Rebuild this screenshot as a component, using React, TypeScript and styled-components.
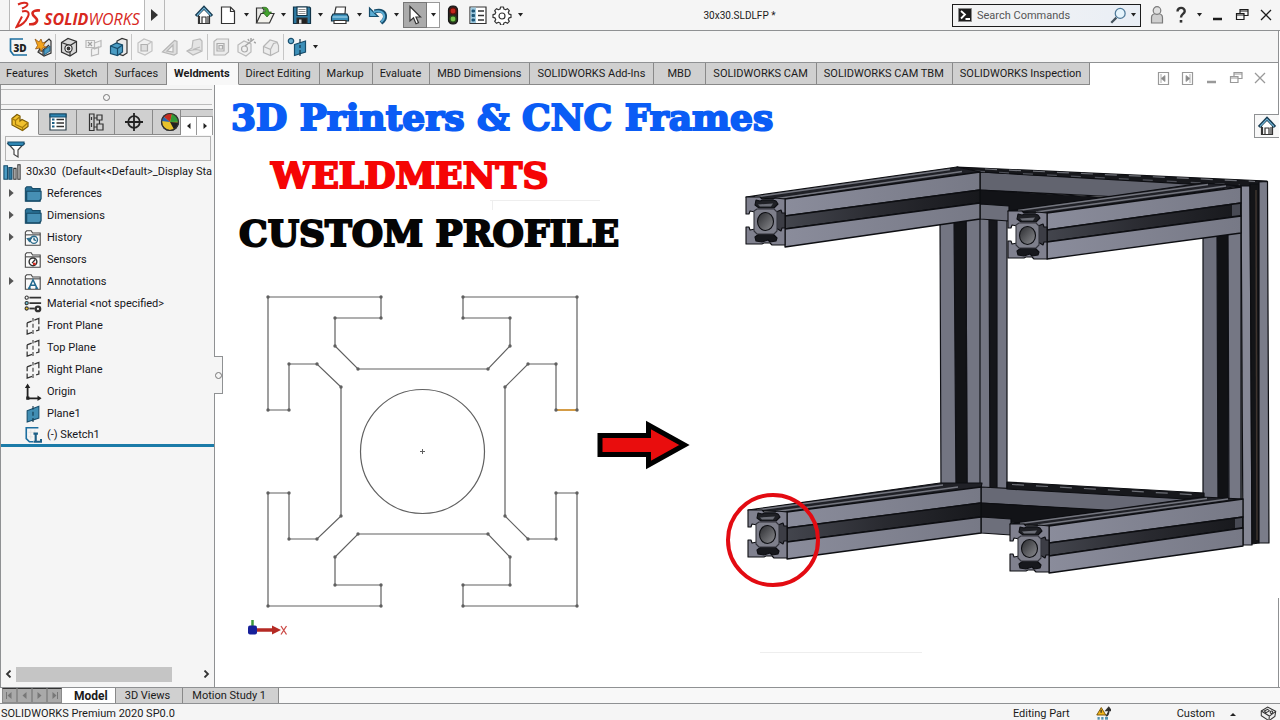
import React from "react";
import styled, { createGlobalStyle, css } from "styled-components";

const line = "#8f9193";
const blue = "#1d7199";

const GlobalStyle = createGlobalStyle`
  * { box-sizing: border-box; }
  body {
    margin: 0;
    background: #fff;
    color: #1b1b1b;
    font-family: Roboto, "Open Sans", sans-serif;
    font-size: 11px;
    line-height: 16px;
  }
  svg { flex: none; }
  button, input {
    font: inherit;
    color: inherit;
    margin: 0;
    padding: 0;
    border: 0;
    background: none;
  }
`;

/* ---------- shell ---------- */

const Shell = styled.div`
  display: flex;
  flex-direction: column;
  min-height: 100vh;
`;

const TitleBar = styled.header`
  display: flex;
  align-items: center;
  height: 31px;
  background: #f5f5f5;
  border-bottom: 1px solid ${line};
`;

const Logo = styled.div`
  display: flex;
  align-items: center;
  gap: 2px;
  width: 136px;
  height: 30px;
  margin-left: 9px;
  padding-left: 5px;
  background: #fff;
  border: solid #b9b9b9;
  border-width: 0 1px;
`;

const LogoText = styled.span`
  padding-top: 8px;
  color: #d8281e;
  font-family: "Open Sans", sans-serif;
  font-size: 16px;
  font-style: italic;
  font-weight: 400;
  line-height: 20px;
  b { font-weight: 700; }
`;

const Flyout = styled.button`
  display: flex;
  align-items: center;
  justify-content: center;
  width: 20px;
  height: 30px;
  border-right: 1px solid #b9b9b9;
`;

const QuickTools = styled.div`
  display: flex;
  align-items: center;
  padding-left: 27px;
`;

const ToolButton = styled.button<{ $w?: number; $pressed?: boolean }>`
  display: flex;
  align-items: center;
  justify-content: center;
  flex: none;
  width: ${(p) => p.$w ?? 24}px;
  height: 26px;
  ${(p) =>
    p.$pressed &&
    css`
      background: #ababab;
      border: 1px solid #777;
    `}
`;

const CaretButton = styled(ToolButton)<{ $boxed?: boolean }>`
  width: 13px;
  ${(p) =>
    p.$boxed &&
    css`
      background: #fff;
      border: 1px solid #999;
      border-left: 0;
      height: 26px;
    `}
`;

const DocTitle = styled.h1`
  flex: 1;
  margin: 0;
  padding-top: 1px;
  font-size: 10px;
  font-weight: 400;
  text-align: center;
  white-space: nowrap;
`;

const Search = styled.div`
  display: flex;
  align-items: center;
  width: 189px;
  height: 23px;
  padding-left: 5px;
  border: 1px solid #1c1c1c;
  background: linear-gradient(90deg, #f4f4f4, #e9eef5);
  input {
    flex: 1;
    min-width: 0;
    padding: 1px 0 0 5px;
    outline: 0;
  }
  input::placeholder { color: #555; opacity: 1; }
`;

const WindowTools = styled.div`
  display: flex;
  align-items: center;
  padding: 0 2px 0 4px;
`;

/* ---------- ribbon ---------- */

const Ribbon = styled.div`
  display: flex;
  align-items: center;
  height: 32px;
  padding-left: 5px;
  margin-right: 1px;
  background: #f5f5f5;
  border: solid ${line};
  border-width: 0 1px 1px 0;
`;

const RibbonGroup = styled.div`
  display: flex;
  align-items: center;
  height: 26px;
  & + & {
    border-left: 1px solid #c6c6c6;
  }
`;

const RibbonButton = styled(ToolButton)<{ $off?: boolean }>`
  width: 25px;
  ${(p) => p.$off && css`opacity: 0.9;`}
`;

const TabRow = styled.div`
  display: flex;
  justify-content: space-between;
  height: 22px;
  margin-right: 1px;
  border-right: 1px solid ${line};
`;

const Tabs = styled.nav`
  display: flex;
`;

const Tab = styled.button<{ $active?: boolean }>`
  min-width: 52px;
  height: 22px;
  padding: 1px 8px 0 7px;
  background: #d0d0d0;
  border: solid #898989;
  border-width: 0 1px 1px 0;
  white-space: nowrap;
  &:first-child { padding: 1px 6px 0; }
  ${(p) =>
    p.$active &&
    css`
      background: #f8f8f8;
      border-bottom-color: #f8f8f8;
      font-weight: 700;
    `}
`;

const DocTools = styled.div`
  display: flex;
  align-items: flex-end;
  padding-right: 6px;
  color: #999;
  button { height: 14px; }
`;

/* ---------- body ---------- */

const Body = styled.main`
  display: flex;
  flex: 1;
`;

const Side = styled.aside`
  display: flex;
  flex-direction: column;
  flex: none;
  width: 215px;
  background: #f5f5f5;
  border: solid ${line};
  border-width: 0 1px;
`;

const Splitter = styled.div`
  display: flex;
  align-items: center;
  justify-content: center;
  height: 16px;
  margin: 4px 2px 0 0;
  border: solid #bcbcbc;
  border-width: 1px 0;
  &::after {
    content: "";
    width: 5px;
    height: 5px;
    border: 1px solid #777;
    border-radius: 50%;
  }
`;

const ManagerTabs = styled.div`
  display: flex;
  align-items: flex-end;
  height: 26px;
  margin: 4px 1px 0 0;
  background: #d0d0d0;
  border-top: 1px solid ${line};
`;

const ManagerTab = styled.button<{ $active?: boolean; $cut?: boolean }>`
  display: flex;
  align-items: center;
  justify-content: center;
  width: 38px;
  height: 25px;
  border: solid #898989;
  border-width: 0 1px 1px 0;
  ${(p) =>
    p.$active &&
    css`
      background: #f8f8f8;
      border-bottom-color: #f8f8f8;
    `}
  ${(p) =>
    p.$cut &&
    css`
      width: 28px;
      justify-content: flex-end;
    `}
`;

const Spin = styled.button`
  display: flex;
  align-items: center;
  justify-content: center;
  flex: 1;
  height: 19px;
  background: #fff;
  border: solid #999;
  border-width: 1px 1px 0 0;
`;

const Filter = styled.label`
  display: flex;
  align-items: center;
  height: 25px;
  margin: 1px 3px 0 4px;
  border: 1px solid #b4b4b4;
  input { flex: 1; min-width: 0; outline: 0; }
`;

const Tree = styled.ul`
  flex: 1;
  margin: 0;
  padding: 0;
  list-style: none;
`;

const TreeRow = styled.li<{ $root?: boolean; $last?: boolean }>`
  display: flex;
  align-items: center;
  gap: 5px;
  height: 22px;
  padding-left: ${(p) => (p.$root ? 2 : 6)}px;
  white-space: nowrap;
  color: #151520;
  > svg { width: 18px; height: 18px; }
  ${(p) =>
    p.$last &&
    css`
      border-bottom: 3px solid #1b7ba8;
    `}
`;

const Twist = styled.span`
  display: flex;
  width: 12px;
  height: 16px;
  padding-top: 3px;
`;

const ScrollRow = styled.div`
  display: flex;
  align-items: center;
  height: 16px;
  margin-bottom: 5px;
  button { display: flex; justify-content: center; width: 15px; }
`;

const Thumb = styled.div`
  width: 156px;
  height: 15px;
  margin-right: auto;
  background: #c5c5c5;
`;

const Canvas = styled.section`
  position: relative;
  flex: 1;
  min-width: 0;
  padding: 3px 16px;
  background: #fff;
`;

const Scene = styled.svg`
  position: absolute;
  inset: 0;
  width: 100%;
  height: 100%;
`;

const Headline = styled.h2<{ $color: string; $indent: number }>`
  position: relative;
  margin: 0 0 0 ${(p) => p.$indent}px;
  color: ${(p) => p.$color};
  -webkit-text-stroke: 2px ${(p) => p.$color};
  stroke-linejoin: round;
  font-family: "DejaVu Serif", serif;
  font-size: 36px;
  font-weight: 700;
  line-height: 58px;
  white-space: nowrap;
`;

const PanelGrip = styled.button`
  position: absolute;
  left: -1px;
  top: 271px;
  display: flex;
  align-items: center;
  justify-content: center;
  width: 9px;
  height: 38px;
  background: #f5f5f5;
  border: 1px solid ${line};
  border-left: 0;
  &::after {
    content: "";
    width: 5px;
    height: 5px;
    border: 1px solid #777;
    border-radius: 50%;
  }
`;

const TaskTab = styled.button`
  position: absolute;
  right: 1px;
  top: 29px;
  display: flex;
  align-items: center;
  justify-content: center;
  width: 25px;
  height: 24px;
  background: #f8f8f8;
  border: solid ${line};
  border-width: 1px 0 1px 1px;
`;

/* ---------- footer ---------- */

const ModelBar = styled.div`
  display: flex;
  height: 17px;
  padding-left: 2px;
  background: #f8f8f8;
  border: solid ${line};
  border-width: 1px 0;
`;

const NavButton = styled.button`
  display: flex;
  align-items: center;
  justify-content: center;
  width: 15px;
  height: 15px;
  background: #a9a9a9;
  border: 1px solid #8b8b8b;
  border-top-color: #333;
`;

const ModelTab = styled.button<{ $active?: boolean }>`
  height: 15px;
  padding: 0 12px 0 9px;
  background: #d0d0d0;
  border-right: 1px solid #898989;
  line-height: 14px;
  white-space: nowrap;
  ${(p) =>
    p.$active &&
    css`
      padding: 0 7px 0 12px;
      background: #fff;
      font-size: 12px;
      font-weight: 700;
    `}
`;

const StatusBar = styled.footer`
  display: flex;
  align-items: center;
  height: 16px;
  padding: 3px 3px 0 1px;
  background: #f5f5f5;
`;

const StatusText = styled.span<{ $grow?: boolean }>`
  flex: ${(p) => (p.$grow ? "1" : "none")};
  white-space: nowrap;
`;

const StatusTools = styled.div<{ $gap: number }>`
  display: flex;
  align-items: center;
  margin-left: ${(p) => p.$gap}px;
`;

/* ---------- icons ---------- */

const Ico = ({ s = 20, children }: { s?: number; children: React.ReactNode }) => (
  <svg width={s} height={s} viewBox="0 0 20 20" fill="none" stroke="#333" strokeWidth="1.2" aria-hidden="true">
    {children}
  </svg>
);

const CaretGlyph = () => (
  <svg width="5" height="4" viewBox="0 0 5 4" aria-hidden="true"><path d="M0 0h5L2.5 3.5z" fill="#222" /></svg>
);

const Caret = ({ boxed, label }: { boxed?: boolean; label: string }) => (
  <CaretButton $boxed={boxed} aria-label={label}><CaretGlyph /></CaretButton>
);

const HomeIcon = () => (
  <Ico>
    <path d="M4.500 9v9.500h11V9L10 4z" fill="#fff" />
    <path d="M2 11 10 2.500 18 11" stroke="#173a50" strokeWidth="3.200" />
    <path d="M3 10.500 10 3l7 7.500" stroke="#6fb3d6" strokeWidth="1.100" />
    <path d="M8 18v-6h4v6M5.500 11v7M14 11v7" />
  </Ico>
);

const NewIcon = () => (
  <Ico><path d="M3.500 2h9l4 4v12.500h-13z" fill="#fff" /><path d="M12.500 2v4.500h4" /></Ico>
);

const OpenIcon = () => (
  <Ico>
    <path d="M1.500 18V3h6l1.500 2v3h6" fill="#e9e9e6" />
    <path d="M1.500 18 6 8.500h13L14.500 18z" fill="#f3f2ec" />
    <path d="M7 2.500c5-1 6.500 1 6.500 4.500h3l-4.500 5-4.500-5h3c0-2-1-3.500-3.500-4.500z" fill="#43a32c" stroke="#245f18" strokeWidth=".7" />
  </Ico>
);

const SaveIcon = () => (
  <Ico>
    <path d="M1.500 2h16l1 1v15.500h-17z" fill="#2e7ba3" stroke="#123448" />
    <path d="M5 2h10v8.500H5z" fill="#fff" stroke="#123448" />
    <path d="M6.500 4.500h7M6.500 6.500h7M6.500 8.500h7" stroke="#777" strokeWidth=".8" />
    <path d="M5 13h10v5.500H5z" fill="#222" />
    <path d="M7 14.500h2.500v4H7z" fill="#ddd" stroke="none" />
  </Ico>
);

const PrintIcon = () => (
  <Ico>
    <path d="M4.500 9 6 2h9.500L15 9z" fill="#fff" />
    <path d="M3 9h14l1.500 3v4h-17v-4z" fill="#3e93bd" stroke="#123448" />
    <path d="M2.500 12h15" stroke="#9fd2ea" />
    <path d="M4 15.500h12v3H4z" fill="#fff" />
  </Ico>
);

const UndoIcon = () => (
  <Ico>
    <path d="M6.500 6.500c6-2 11 0 10.500 5.500 0 2-1.500 4-4 6" stroke="#174d6c" strokeWidth="4" />
    <path d="M1.500 3v8.500H10z" fill="#5bacd3" stroke="#174d6c" />
    <path d="M5.500 7c6-2 11 0 10.700 5 0 1.800-1.400 3.500-3 5" stroke="#5bacd3" strokeWidth="2" />
  </Ico>
);

const PointerIcon = () => (
  <Ico><path d="M5 1.500v14.500l3.500-3.200 2.500 6 2.500-1.100-2.500-5.700h4.500z" fill="#fff" /></Ico>
);

const LightIcon = () => (
  <Ico>
    <rect x="5.500" y="1" width="9" height="18" rx="4" fill="#2c2320" stroke="#161616" />
    <circle cx="10" cy="6" r="3" fill="#c4261d" stroke="#651009" />
    <circle cx="10" cy="14" r="3" fill="#79c24b" stroke="#26551a" />
  </Ico>
);

const ListIcon = ({ s = 20 }: { s?: number }) => (
  <Ico s={s}>
    <path d="M2 2h16v16.500H2z" fill="#fff" />
    <path d="M2.500 2.500H8V18H2.500z" fill="#9dc9df" stroke="none" />
    <path d="M4 5h2.500v2H4zM4 9.500h2.500v2H4zM4 14h2.500v2H4z" fill="#1c5f85" stroke="#174d6c" strokeWidth=".8" />
    <path d="M10 6h6M10 10.500h6M10 15h6" strokeWidth="1.500" />
  </Ico>
);

const PropertyIcon = () => (
  <Ico>
    <path d="M2 2h16v16H2z" fill="#fff" stroke="#2a3d48" />
    <path d="M2 2h16v3H2z" fill="#2e86b3" stroke="#174d6c" />
    <path d="M4 7.500h2.500M4 11h2.500M4 14.500h2.500" stroke="#1c5f85" strokeWidth="2" />
    <path d="M8.500 7.500H16M8.500 11H16M8.500 14.500H16" strokeWidth="1.400" />
  </Ico>
);

const GearIcon = () => (
  <Ico>
    <path
      d="M8.600 2h2.800l.5 2 1.700.7 1.800-1 1.900 1.900-1 1.800.7 1.700 2 .5v2.800l-2 .5-.7 1.700 1 1.800-1.900 1.900-1.800-1-1.700.7-.5 2H8.600l-.5-2-1.700-.7-1.800 1-1.900-1.900 1-1.800-.7-1.700-2-.5V9.600l2-.5.7-1.700-1-1.800 1.900-1.900 1.800 1 1.700-.7z"
      fill="#fff"
      strokeLinejoin="round"
    />
    <circle cx="10" cy="11" r="3" />
  </Ico>
);

const PromptIcon = () => (
  <svg width="14" height="14" viewBox="0 0 14 14" aria-hidden="true">
    <path d="M.5.5h13v13H.5z" fill="#1d1d1d" stroke="#888" />
    <path d="m3 3 4 3.500-4 4M7.500 11H12" fill="none" stroke="#fff" strokeWidth="1.800" />
  </svg>
);

const LensIcon = () => (
  <Ico s={17}>
    <path d="m1.500 18.500 6-6" stroke="#44525c" strokeWidth="2.600" />
    <circle cx="12" cy="7.500" r="5.800" fill="#e6f4fc" stroke="#4f7a9a" strokeWidth="1.500" />
  </Ico>
);

const UserIcon = () => (
  <Ico>
    <path d="M4.500 18v-5.500c0-3 2-4 5.500-4s5.500 1 5.500 4V18z" fill="#cfcfcf" stroke="#7b7b7b" />
    <circle cx="10" cy="5.500" r="3.800" fill="#e0e0e0" stroke="#7b7b7b" />
  </Ico>
);

const HelpIcon = () => (
  <Ico><path d="M6.500 6.500c0-5 7.500-4.500 7.200-.2C13.500 9 10 9 10 12.500" strokeWidth="2.400" /><path d="M8.700 15h2.600v2.600H8.700z" fill="#333" stroke="none" /></Ico>
);

const MinIcon = () => <Ico><path d="M5 14h9" strokeWidth="2.500" stroke="currentColor" /></Ico>;
const RestoreIcon = () => (
  <Ico><path d="M4.500 8.500H12v6H4.500zM4.500 10H12M8 8V4.500h8v6h-3.500M8 6h8" stroke="currentColor" /></Ico>
);
const CloseIcon = () => <Ico><path d="m5 5 10 10M15 5 5 15" stroke="currentColor" strokeWidth="1.300" /></Ico>;
const DockIcon = ({ flip }: { flip?: boolean }) => (
  <Ico>
    <path d="M4.500 4.500h10v12h-10z" stroke="#999" />
    {flip ? <path d="M12 6v9M8 7.500v6l4-3z" fill="#888" stroke="#999" strokeWidth=".8" /> : <path d="M7 6v9M11 7.500v6l-4-3z" fill="#888" stroke="#999" strokeWidth=".8" />}
  </Ico>
);

const Sketch3DIcon = () => (
  <Ico>
    <path d="M15 2H2.500v12l3 4H19" stroke="#1d6fa0" strokeWidth="1.700" />
    <text x="5.500" y="14.500" fill="#222" stroke="none" fontFamily="Open Sans, sans-serif" fontWeight="800" fontSize="10">3D</text>
  </Ico>
);

const SystemIcon = () => (
  <Ico>
    <path d="M9 8 16 2l2 2v12l-7 3-6-4z" fill="#e2e2e0" />
    <path d="M6 14h9M10 18v-5l6-5" />
    <path d="m2 2 4 3 2-3 1.500 4 3-1-2 3.500 3 2-4 .5-1 3.500-2-3.500-4 1 2-3.500z" fill="#f2a31c" stroke="#8a4a0a" strokeWidth=".7" />
    <path d="m11 13 6-4v5l-6 4z" fill="#4a9cc4" stroke="#174d6c" strokeWidth=".8" />
  </Ico>
);

const BlockIcon = ({ c = "#333", f = "#d9d9d9" }: { c?: string; f?: string }) => (
  <Ico>
    <path d="M2.500 5.500 9 1.500l8.500 3v10.500l-6.500 4-8.500-4z" fill={f} stroke={c} />
    <path d="m2.500 5.500 8.500 3 6.500-4M11 8.500V19" stroke={c} />
    <circle cx="9.500" cy="11.500" r="3.600" fill="#f7f7f7" stroke={c} />
    <circle cx="9.500" cy="11.500" r="1.300" fill={c} stroke={c} />
  </Ico>
);

const TrimIcon = () => (
  <Ico>
    <path d="M2 3.500h8.500v7H2zM10.500 6 17 3.500v6l-6.500 2.500zM7.500 12l7-2v7l-7 2z" fill="#f2f2f2" stroke="#b3b3b3" />
    <path d="m4 5 4 4M8 5 4 9" stroke="#999" />
  </Ico>
);

const ExtrudeIcon = () => (
  <Ico>
    <path d="M8 4 13 1.500l5 1.500v13l-4 2.500-6-2z" fill="#e9e9e9" />
    <path d="m1.500 9 6-3 6 2v7l-5 3.500-7-2z" fill="#4a9cc4" stroke="#174d6c" />
    <path d="m1.500 9 7 2.500 5-3.500M8.500 11.500v7" stroke="#174d6c" />
  </Ico>
);

const CapIcon = () => (
  <Ico>
    <path d="M3 6 9 2l8 3v9l-7 4-7-3z" fill="#f0f0f0" stroke="#bdbdbd" />
    <path d="M6 7.500h6.500v6.500H6z" fill="#ddd" stroke="#a9a9a9" />
    <path d="m12.500 7.500 4-2.500" stroke="#bdbdbd" />
  </Ico>
);

const GussetIcon = () => (
  <Ico><path d="m2.500 15 12-11.500 2.500 1v12l-3 1.500z" fill="#dcdcdc" stroke="#b0b0b0" /><path d="m7 14 6-6v7z" fill="#f5f5f5" stroke="#b0b0b0" /></Ico>
);

const BeadIcon = () => (
  <Ico><path d="M8 3.500 15 2l2 2v10l-9 4-6-4 5-3z" fill="#e3e3e3" stroke="#b4b4b4" /><path d="M8 12.500 15 10M2 14l9-1.500 5 1" stroke="#b4b4b4" /></Ico>
);

const HoleIcon = () => (
  <Ico><path d="M3 4.500 6 2h11.500v13L14 18H3z" fill="#ececec" stroke="#b0b0b0" /><path d="M6 6.500h7v7.500H6zM8 8.500h3.500v3.500H8z" stroke="#a5a5a5" /></Ico>
);

const WandIcon = () => (
  <Ico>
    <path d="m2 8 6-4 7 3v8l-5 4-8-4z" fill="#f0f0f0" stroke="#b4b4b4" />
    <circle cx="8.500" cy="12" r="3" stroke="#a5a5a5" />
    <path d="m9 9 9-7M15 1v3M18 5l2 1M12 2l1 2" stroke="#9d9d9d" strokeWidth="1.500" />
  </Ico>
);

const ChamferIcon = () => (
  <Ico><path d="M2.500 9.500 9 3l7 2 1.500 3.500v6l-8 4-7-3z" fill="#ececec" stroke="#b0b0b0" /><path d="m2.500 9.500 7 3v6M9.500 12.500l3-6 4-1" stroke="#b0b0b0" /></Ico>
);

const RefIcon = () => (
  <Ico>
    <circle cx="4" cy="4" r="2.700" fill="#67add0" stroke="#174d6c" />
    <path d="m7.500 7.500 11-3.500v11l-11 3.500z" fill="#3d8fb8" stroke="#174d6c" />
    <path d="M13 2v4M13 8v3M13 13v6" stroke="#123448" />
  </Ico>
);

const PartIcon = () => (
  <Ico>
    <path d="m2 6.500 5-4 3 1.500v5l2-1.500 6 3v4l-5.500 4L2 13z" fill="#f1c12d" stroke="#7c5c05" />
    <path d="m2 6.500 3.500 2 4.500-4M5.500 8.500v4l7 3 5.500-5M12.500 15.500v3" stroke="#a67c0a" />
  </Ico>
);

const ConfigIcon = () => (
  <Ico><path d="M3.500 2H8v16.500H3.500zM8 6h3M8 15h3M11 3h5v5h-5zM11 12h6v6h-6zM5.500 5v3M5.500 11v4M13.500 8v4" /></Ico>
);

const TargetIcon = () => (
  <Ico><circle cx="10" cy="10" r="5.800" stroke="#222" strokeWidth="1.800" /><path d="M10 1v18M1 10h18" stroke="#222" strokeWidth="1.800" /></Ico>
);

const BallIcon = () => (
  <Ico>
    <circle cx="10" cy="10" r="8.500" fill="#e8c22b" />
    <path d="M10 10 3.500 4.500A8.500 8.500 0 0 1 12 1.700z" fill="#c62c20" stroke="none" />
    <path d="m10 10 2-8.300a8.500 8.500 0 0 1 6.500 8z" fill="#319a37" stroke="none" />
    <path d="M10 10 1.500 9a8.500 8.500 0 0 1 2-4.500z" fill="#2864b0" stroke="none" />
    <path d="m10 10 8.500.5c0 3-1.500 5.500-4.500 7z" fill="#222" stroke="none" />
    <circle cx="10" cy="10" r="8.500" stroke="#333" />
  </Ico>
);

const FunnelIcon = () => (
  <Ico>
    <path d="M2 4.500h16l-6 6.500v7l-4-2.500V11z" fill="#fff" stroke="#444" />
    <path d="M2 3h16v2.500l-1.500 1h-13L2 5z" fill="#2e86b3" stroke="#174d6c" />
  </Ico>
);

const LibraryIcon = () => (
  <Ico s={18}>
    <path d="M1 3h4v15H1z" fill="#4a9cc4" stroke="#174d6c" />
    <path d="M6.500 5H10v13H6.500z" fill="#2e7ba3" stroke="#174d6c" />
    <path d="M12 6h2.500v12H12zM16.500 2H19v16h-2.500z" fill="#ddd" />
  </Ico>
);

const FolderIcon = () => (
  <Ico>
    <path d="M1.500 18V3.500L3 2h5l1.500 2H18v14z" fill="#2a7297" stroke="#174a66" />
    <path d="M3 17.500V7h16v8.500l-2 2z" fill="#468fb4" stroke="#174a66" />
  </Ico>
);

const FolderBase = ({ children }: { children: React.ReactNode }) => (
  <Ico>
    <path d="M1.500 18V3.500L3 2h5l1.500 2.500H18V18z" fill="#fafafa" stroke="#444" />
    <path d="M2 6.500h16" stroke="#444" />
    {children}
  </Ico>
);

const HistoryIcon = () => (
  <FolderBase><circle cx="11" cy="12" r="4" stroke="#2c6c8c" strokeWidth="1.500" /><path d="M3.500 10.500 8.500 10 6 14zM11 9.500V12l2.500 1" fill="#2c6c8c" stroke="#2c6c8c" /></FolderBase>
);
const SensorIcon = () => (
  <FolderBase><circle cx="10" cy="12" r="4.300" strokeWidth="1.600" fill="#fff" /><path d="m9 13.500 3.500-4" stroke="#333" strokeWidth="1.500" /><path d="M10 13h3v2.500h-3z" fill="#d5281d" stroke="none" /></FolderBase>
);
const AnnotationIcon = () => (
  <FolderBase><path d="m5.500 17 4.500-9.500L14.500 17M7.500 13.500h5M4.500 17h3M12.500 17h3" stroke="#22698f" strokeWidth="1.700" /></FolderBase>
);
const MaterialIcon = () => (
  <Ico>
    <path d="M6 3h13M6 9h13" strokeWidth="2" /><path d="M6 15h6" strokeWidth="2" />
    <circle cx="3" cy="3" r="1.800" fill="#fff" /><circle cx="3" cy="9" r="1.800" fill="#6cc0d5" /><circle cx="3" cy="15" r="1.800" fill="#f0c92c" />
    <circle cx="15.500" cy="15.500" r="2.500" strokeWidth="2.500" />
  </Ico>
);
const PlaneIcon = () => (
  <Ico>
    <path d="m3.500 6.500 5-2M11.500 3.500l5-2V8M16.500 10.500v4l-3 1M9 17l-5.500 2v-5M3.500 11.500v-5" stroke="#333" strokeWidth="1.400" />
    <path d="M10 1v4M10 7.500v4.500M10 14.500v4.500" stroke="#444" strokeWidth="1.300" />
  </Ico>
);
const OriginIcon = () => (
  <Ico><path d="M4 3v14h14" stroke="#222" strokeWidth="2" /><path d="M1 5.500 4 .5l3 5zM15 14l4.500 3-4.500 3zM2.500 15h3.500v3.500H2.500z" fill="#222" stroke="none" /></Ico>
);
const PlaneSolidIcon = () => (
  <Ico><path d="m3.500 6.500 13-5v13l-13 4.500z" fill="#418eb3" stroke="#174d6c" /><path d="M10 1v4M10 7.500v4.500M10 14.500v4.500" stroke="#0f3448" /></Ico>
);
const SketchIcon = () => (
  <Ico>
    <path d="M16 2H2.500v12l3.500 3.500h4" stroke="#1d6fa0" strokeWidth="1.800" />
    <path d="M5 7h7M5 12h5M7.500 4v11M12 4v4" stroke="#dedede" strokeWidth=".8" />
    <path d="M10.500 8.500h5M13 9v8M10.500 17.500h8.500v-3" stroke="#1d5f86" strokeWidth="2.400" />
  </Ico>
);

const Triangle = ({ dir, bar }: { dir: "l" | "r"; bar?: boolean }) => (
  <svg width="9" height="9" viewBox="0 0 9 9" aria-hidden="true" fill="#777">
    {dir === "l" ? <path d="M6.500 1v7L2.500 4.500z" /> : <path d="M2.500 1v7l4-3.500z" />}
    {bar && <path d={dir === "l" ? "M1 1h1v7H1z" : "M7 1h1v7H7z"} />}
  </svg>
);

const Arrow = ({ dir, c = "#222", s = 6 }: { dir: "l" | "r" | "u"; c?: string; s?: number }) => (
  <svg width={s} height={s} viewBox="0 0 6 6" aria-hidden="true">
    <path d={dir === "l" ? "M4.500 0v6L1 3z" : dir === "r" ? "M1.500 0v6L5 3z" : "M0 5h6L3 2z"} fill={c} />
  </svg>
);

const Chevron = ({ dir }: { dir: "l" | "r" }) => (
  <svg width="7" height="8" viewBox="0 0 7 8" fill="none" stroke="#333" strokeWidth="1.800" aria-hidden="true">
    <path d={dir === "l" ? "M5.500.5 2 4l3.500 3.500" : "M1.500.5 5 4 1.500 7.500"} />
  </svg>
);

/* ---------- drawings ---------- */

const profilePoints: [number, number][] = [
  [268, 297], [381, 297], [381, 318], [335, 318], [335, 346], [358, 369], [488, 369], [510, 346], [510, 318],
  [463, 318], [463, 297], [577, 297], [577, 410], [556, 410], [556, 364], [528, 364], [505, 387], [505, 516],
  [528, 539], [556, 539], [556, 493], [577, 493], [577, 606], [463, 606], [463, 585], [510, 585], [510, 557],
  [488, 534], [358, 534], [335, 557], [335, 585], [381, 585], [381, 606], [268, 606], [268, 493], [289, 493],
  [289, 539], [317, 539], [341, 516], [341, 387], [317, 364], [289, 364], [289, 410], [268, 410],
];

const ProfileSketch = () => (
  <g fill="none" stroke="#606060" strokeWidth="1.200">
    <polygon points={profilePoints.map((p) => p.join(",")).join(" ")} />
    <circle cx="422.500" cy="451.500" r="62" />
    <path d="M420 451.500h5M422.500 449v5" strokeWidth="1" />
    <path d="M556 410h21" stroke="#d89a3a" strokeWidth="1.800" />
    {profilePoints.map(([x, y]) => (
      <circle key={`${x}-${y}`} cx={x} cy={y} r="1.700" fill="#606060" stroke="none" />
    ))}
  </g>
);

const EndFace = ({ x, y }: { x: number; y: number }) => (
  <g transform={`translate(${x} ${y})`} stroke="#0d0e12" strokeWidth="1.100">
    <path d="M0 0h14l2 2h11l2-1 10 1v46H26l-2-2h-6l-2 1H0V30h3l1 3 5-1 1-3V18l-1-3-5-1-1 3H0z" fill="#80818f" />
    <path d="M39 16h-3l-1-3-5 2v16l5 3 1-3h3z" fill="#3c3d45" />
    <path d="m10 3 4 1 3-1h10l3 1 2 3-4 4H13L9 8z" fill="#1f2025" />
    <path d="m12 7.500 15-1-2 3H14z" fill="#6b6d76" stroke="none" />
    <path d="m9 40 4-3h14l4 4-1 3-6 1-2-2-6 2-6-1z" fill="#17181d" />
    <path d="m8 14 3-2h17l3 3v19l-3 3H11l-3-3z" fill="#7e7f8b" stroke="#34353d" />
    <ellipse cx="19.500" cy="24.500" rx="8" ry="9" fill="url(#bore)" />
  </g>
);

interface BeamProps {
  x1: number;
  x2: number;
  left: [number, number, number, number];
  right: [number, number, number, number];
}

const BeamSide = ({ x1, x2, left, right }: BeamProps) => (
  <g stroke="#0d0e12" strokeWidth="1.300">
    <path d={`M${x1} ${left[0]}L${x2} ${right[0]}V${right[1]}L${x1} ${left[1]}z`} fill="url(#steel)" />
    <path d={`M${x1} ${left[1]}L${x2} ${right[1]}V${right[2]}L${x1} ${left[2]}z`} fill="url(#slot)" />
    <path d={`M${x1} ${left[2]}L${x2} ${right[2]}V${right[3]}L${x1} ${left[3]}z`} fill="url(#steel)" />
  </g>
);

const FrameModel = () => (
  <g strokeLinejoin="round">
    <defs>
      <linearGradient id="steel" x1="0" y1="0" x2="1" y2="0">
        <stop offset="0" stopColor="#8a8c9b" />
        <stop offset="1" stopColor="#777986" />
      </linearGradient>
      <linearGradient id="slot" x1="0" y1="0" x2="1" y2="0">
        <stop offset="0" stopColor="#43454d" />
        <stop offset=".5" stopColor="#292a30" />
        <stop offset="1" stopColor="#17181c" />
      </linearGradient>
      <linearGradient id="bore" x1="0" y1="0" x2="1" y2="1">
        <stop offset="0" stopColor="#2a2b2f" />
        <stop offset="1" stopColor="#8b8c90" />
      </linearGradient>
    </defs>

    {/* rear uprights */}
    <g stroke="#101116" strokeWidth="1.200">
      <path d="M940 218h67v274h-66z" fill="#737582" />
      <path d="M954 218h12l1 272h-11z" fill="#131417" />
      <path d="M980 218v270M966 218l1 272" />
      <path d="M989 218h8v272h-7z" fill="#15161a" />
      <path d="M1203 232h38v272h-38z" fill="#6d6f7c" />
      <path d="M1217 232h11v270h-10z" fill="#111215" />
      <path d="M1228 232h13v270h-12z" fill="#757784" />
    </g>

    {/* rear cross members */}
    <g stroke="#0d0e12" strokeWidth="1.200">
      <path d="m980 172 240 12v18l-240-12z" fill="#62646f" />
      <path d="m980 190 150 9-30 7-92 8-28-8z" fill="#121317" />
      <path d="m980 204 29 2v15l-29-2z" fill="#6d6f7b" />
      <path d="m957 167 310 14v5l-27 1-260-15z" fill="#17181c" />
      <path d="m981 487 222 11v6l-80 8-142-9z" fill="#676975" />
      <path d="m981 503 159 9-112 13-47-7z" fill="#121317" />
      <path d="m981 517 30 2v16l-30-2z" fill="#6d6f7b" />
      <path d="m1007 482 197 11v7l-197-11z" fill="#17181c" />
    </g>
    <path d="m985 169 270 12.500" stroke="#6d6f76" strokeWidth="1.200" strokeDasharray="12 12" />
    <path d="m975 171 265 14" stroke="#4d4f57" strokeWidth="1.200" strokeDasharray="10 14" />
    <path d="m1012 484.500 188 10.500" stroke="#6d6f76" strokeWidth="1.200" strokeDasharray="12 12" />

    {/* left arms */}
    <g stroke="#0d0e12" strokeWidth="1.200">
      <path d="m746 197 211-30 23 5-194 28z" fill="#202127" />
      <path d="m748 510 192-27h42l-1 5-193 24z" fill="#202127" />
    </g>
    <g stroke="#74767f" strokeWidth="1.500">
      <path d="m755 197 195-27.500M774 199l188-27.500" />
      <path d="m757 510 186-25M776 511.500l182-24.500" />
    </g>
    <BeamSide x1={785} x2={980} left={[199, 216, 229, 247]} right={[172, 190, 203, 219]} />
    <BeamSide x1={787} x2={981} left={[512, 528, 542, 559]} right={[487, 503, 517, 533]} />
    <EndFace x={746} y={197} />
    <EndFace x={748} y={510} />

    {/* front right upright */}
    <g stroke="#0d0e12" strokeWidth="1.200">
      <path d="M1241 186h9l2 359h-9z" fill="#868896" />
      <path d="M1250 184h9v359l-7 1z" fill="#131417" />
      <path d="m1259 182 8.500-.5 1.500 361.500h-10z" fill="#7a7c89" />
    </g>
    <path d="m1256 190 1 350" stroke="#3e342f" strokeWidth="1.500" />

    {/* right arms */}
    <g stroke="#0d0e12" strokeWidth="1.200">
      <path d="m1008 211 195-28 38 3-193 27z" fill="#202127" />
      <path d="m1010 524 192-27 41 2-193 27z" fill="#202127" />
    </g>
    <g stroke="#74767f" strokeWidth="1.500">
      <path d="m1018 210.500 190-26M1036 212l190-26" />
      <path d="m1020 523.500 187-25M1038 525l190-26" />
    </g>
    <BeamSide x1={1047} x2={1241} left={[213, 230, 242, 259]} right={[187, 203, 216, 233]} />
    <BeamSide x1={1049} x2={1243} left={[526, 543, 556, 573]} right={[499, 517, 528, 546]} />
    <path d="M1232 205l8-1v11l-8 1zM1235 519l7-1v9l-7 1z" fill="#484a54" />
    <EndFace x={1008} y={211} />
    <EndFace x={1010} y={524} />
  </g>
);

const ModelScene = () => (
  <Scene viewBox="215 85 1065 602" preserveAspectRatio="xMinYMin meet" fill="none" role="img" aria-label="Profile sketch and the welded frame made from it">
    <path d="M490 200.500h110M492.500 200v10M760 652.500h162" stroke="#eeeeee" />
    <ProfileSketch />
    <path d="M600 435.500h48.500v-10.500l36 20-36 20v-10.500H600z" fill="#e90d0d" stroke="#000" strokeWidth="5" />
    <FrameModel />
    <circle cx="773" cy="540" r="45" stroke="#e30b12" strokeWidth="4" />
    <path d="M252.500 620v8" stroke="#3d9a3d" strokeWidth="2.500" />
    <path d="M257 630h17" stroke="#b52a24" strokeWidth="3.500" />
    <path d="m272 625.500 9 4.500-9 4.500z" fill="#b52a24" />
    <rect x="248" y="625.500" width="9" height="9" rx="2" fill="#17209a" />
    <path d="m281 626 5.500 8.500M286.500 626l-5.500 8.500" stroke="#cc4a46" strokeWidth="1.300" />
    <path d="M1278.500 85v29M1278.500 598v89" stroke="#8f9193" />
  </Scene>
);

/* ---------- data ---------- */

const commandTabs = [
  "Features", "Sketch", "Surfaces", "Weldments", "Direct Editing", "Markup", "Evaluate", "MBD Dimensions",
  "SOLIDWORKS Add-Ins", "MBD", "SOLIDWORKS CAM", "SOLIDWORKS CAM TBM", "SOLIDWORKS Inspection",
];

const ribbon: { name: string; icon: React.ReactNode; off?: boolean }[][] = [
  [{ name: "3D Sketch", icon: <Sketch3DIcon /> }, { name: "Weldment", icon: <SystemIcon /> }],
  [
    { name: "Structural Member", icon: <BlockIcon /> },
    { name: "Trim/Extend", icon: <TrimIcon />, off: true },
    { name: "Extruded Boss", icon: <ExtrudeIcon /> },
  ],
  [
    { name: "End Cap", icon: <CapIcon />, off: true },
    { name: "Gusset", icon: <GussetIcon />, off: true },
    { name: "Weld Bead", icon: <BeadIcon />, off: true },
  ],
  [
    { name: "Extruded Cut", icon: <HoleIcon />, off: true },
    { name: "Hole Wizard", icon: <WandIcon />, off: true },
    { name: "Chamfer", icon: <ChamferIcon />, off: true },
  ],
];

const tree: { label: string; icon: React.ReactNode; open?: boolean }[] = [
  { label: "References", icon: <FolderIcon />, open: true },
  { label: "Dimensions", icon: <FolderIcon />, open: true },
  { label: "History", icon: <HistoryIcon />, open: true },
  { label: "Sensors", icon: <SensorIcon /> },
  { label: "Annotations", icon: <AnnotationIcon />, open: true },
  { label: "Material <not specified>", icon: <MaterialIcon /> },
  { label: "Front Plane", icon: <PlaneIcon /> },
  { label: "Top Plane", icon: <PlaneIcon /> },
  { label: "Right Plane", icon: <PlaneIcon /> },
  { label: "Origin", icon: <OriginIcon /> },
  { label: "Plane1", icon: <PlaneSolidIcon /> },
  { label: "(-) Sketch1", icon: <SketchIcon /> },
];

/* ---------- page ---------- */

export default function App() {
  return (
    <Shell>
      <GlobalStyle />
      <TitleBar>
        <Logo>
          <svg width="27" height="28" viewBox="0 0 27 28" fill="none" stroke="#d8281e" strokeWidth="2" aria-hidden="true">
            <path d="M3 3.500c4-2 9-2.500 9.500-.5.300 1.800-3 3.500-5.500 4.500" />
            <path d="M7 10.500c5-1.500 8 .5 6 5C11 20 6.500 24.500 1.500 26L7 15.500" />
            <path d="M25 9.500c-4-.5-7.500.5-7.500 3 0 3 5.500 4.500 4.500 7.500-.8 2.500-4.500 3.500-8 3.200" strokeWidth="2.600" />
          </svg>
          <LogoText><b>SOLID</b>WORKS</LogoText>
        </Logo>
        <Flyout aria-label="Show menu">
          <svg width="7" height="12" viewBox="0 0 7 12" aria-hidden="true"><path d="M0 0v12l7-6z" fill="#333" /></svg>
        </Flyout>
        <QuickTools>
          <ToolButton aria-label="Home"><HomeIcon /></ToolButton>
          <ToolButton aria-label="New"><NewIcon /></ToolButton>
          <Caret label="New options" />
          <ToolButton aria-label="Open"><OpenIcon /></ToolButton>
          <Caret label="Open options" />
          <ToolButton aria-label="Save"><SaveIcon /></ToolButton>
          <Caret label="Save options" />
          <ToolButton $w={26} aria-label="Print"><PrintIcon /></ToolButton>
          <Caret label="Print options" />
          <ToolButton aria-label="Undo"><UndoIcon /></ToolButton>
          <Caret label="Undo options" />
          <ToolButton $pressed aria-label="Select"><PointerIcon /></ToolButton>
          <Caret boxed label="Select options" />
          <ToolButton $w={26} aria-label="Rebuild"><LightIcon /></ToolButton>
          <ToolButton aria-label="File Properties"><ListIcon /></ToolButton>
          <ToolButton aria-label="Options"><GearIcon /></ToolButton>
          <Caret label="More options" />
        </QuickTools>
        <DocTitle>30x30.SLDLFP *</DocTitle>
        <Search>
          <PromptIcon />
          <input type="text" placeholder="Search Commands" aria-label="Search Commands" />
          <LensIcon />
          <Caret label="Search scope" />
        </Search>
        <WindowTools>
          <ToolButton aria-label="Sign in"><UserIcon /></ToolButton>
          <ToolButton aria-label="Help"><HelpIcon /></ToolButton>
          <Caret label="Help options" />
          <ToolButton aria-label="Minimize"><MinIcon /></ToolButton>
          <ToolButton aria-label="Restore"><RestoreIcon /></ToolButton>
          <ToolButton aria-label="Close"><CloseIcon /></ToolButton>
        </WindowTools>
      </TitleBar>

      <Ribbon>
        {ribbon.map((group, i) => (
          <RibbonGroup key={i}>
            {group.map((b) => (
              <RibbonButton key={b.name} $off={b.off} aria-label={b.name}>{b.icon}</RibbonButton>
            ))}
          </RibbonGroup>
        ))}
        <RibbonGroup>
          <RibbonButton aria-label="Reference Geometry"><RefIcon /></RibbonButton>
          <Caret label="Reference Geometry options" />
        </RibbonGroup>
      </Ribbon>

      <TabRow>
        <Tabs>
          {commandTabs.map((t) => <Tab key={t} $active={t === "Weldments"}>{t}</Tab>)}
        </Tabs>
        <DocTools>
          <ToolButton aria-label="Dock left"><DockIcon /></ToolButton>
          <ToolButton aria-label="Dock right"><DockIcon flip /></ToolButton>
          <ToolButton aria-label="Minimize document"><MinIcon /></ToolButton>
          <ToolButton aria-label="Restore document"><RestoreIcon /></ToolButton>
          <ToolButton aria-label="Close document"><CloseIcon /></ToolButton>
        </DocTools>
      </TabRow>

      <Body>
        <Side>
          <Splitter />
          <ManagerTabs>
            <ManagerTab $active aria-label="FeatureManager"><PartIcon /></ManagerTab>
            <ManagerTab aria-label="PropertyManager"><PropertyIcon /></ManagerTab>
            <ManagerTab aria-label="ConfigurationManager"><ConfigIcon /></ManagerTab>
            <ManagerTab aria-label="DimXpertManager"><TargetIcon /></ManagerTab>
            <ManagerTab $cut aria-label="DisplayManager"><BallIcon /></ManagerTab>
            <Spin aria-label="Previous tabs"><Arrow dir="l" /></Spin>
            <Spin aria-label="Next tabs"><Arrow dir="r" /></Spin>
          </ManagerTabs>
          <Filter>
            <FunnelIcon />
            <input type="text" aria-label="Filter" />
          </Filter>
          <Tree>
            <TreeRow $root><LibraryIcon />30x30&nbsp; (Default&lt;&lt;Default&gt;_Display Sta</TreeRow>
            {tree.map((n, i) => (
              <TreeRow key={n.label} $last={i === tree.length - 1}>
                <Twist>{n.open && <Arrow dir="r" c="#555" s={8} />}</Twist>
                {n.icon}
                {n.label}
              </TreeRow>
            ))}
          </Tree>
          <ScrollRow>
            <button aria-label="Scroll left"><Chevron dir="l" /></button>
            <Thumb />
            <button aria-label="Scroll right"><Chevron dir="r" /></button>
          </ScrollRow>
        </Side>
        <Canvas>
          <ModelScene />
          <Headline $color="#0a5cf5" $indent={0}>3D Printers &amp; CNC Frames</Headline>
          <Headline $color="#f50505" $indent={40}>WELDMENTS</Headline>
          <Headline $color="#050505" $indent={8}>CUSTOM PROFILE</Headline>
          <PanelGrip aria-label="Collapse panel" />
          <TaskTab aria-label="Resources"><HomeIcon /></TaskTab>
        </Canvas>
      </Body>

      <ModelBar>
        <NavButton aria-label="First tab"><Triangle dir="l" bar /></NavButton>
        <NavButton aria-label="Previous tab"><Triangle dir="l" /></NavButton>
        <NavButton aria-label="Next tab"><Triangle dir="r" /></NavButton>
        <NavButton aria-label="Last tab"><Triangle dir="r" bar /></NavButton>
        <ModelTab $active>Model</ModelTab>
        <ModelTab>3D Views</ModelTab>
        <ModelTab>Motion Study 1</ModelTab>
      </ModelBar>
      <StatusBar>
        <StatusText $grow>SOLIDWORKS Premium 2020 SP0.0</StatusText>
        <StatusText>Editing Part</StatusText>
        <StatusTools $gap={26}>
          <Ico s={15}>
            <path d="m1 12 6-10 6 10z" fill="#f2b51c" stroke="#6d4d05" />
            <path d="M6.800 5v4" stroke="#222" strokeWidth="1.600" />
            <path d="M13 13c3 0 4-3 4-7M13.500 6 17 2l3 4z" fill="#222" strokeWidth="2" />
            <path d="M2 16h3M7 16h3M12 16h4M2 19h3M7 19h3M12 19h4" stroke={blue} strokeWidth="2" />
          </Ico>
        </StatusTools>
        <StatusTools $gap={66}><StatusText>Custom</StatusText></StatusTools>
        <StatusTools $gap={15}><Arrow dir="u" /></StatusTools>
        <StatusTools $gap={24}>
          <Ico s={17}>
            <path d="M1.500 7 9 2.500l9.500 5-1 6-7 5-9-6z" fill="#eee" />
            <path d="m1.500 7 9.500 6 7.500-5.500M11 13l-.5 5.500M5 7l4-2 2 2-4 2z" />
            <circle cx="13.500" cy="8.500" r="1.500" />
          </Ico>
        </StatusTools>
      </StatusBar>
    </Shell>
  );
}
